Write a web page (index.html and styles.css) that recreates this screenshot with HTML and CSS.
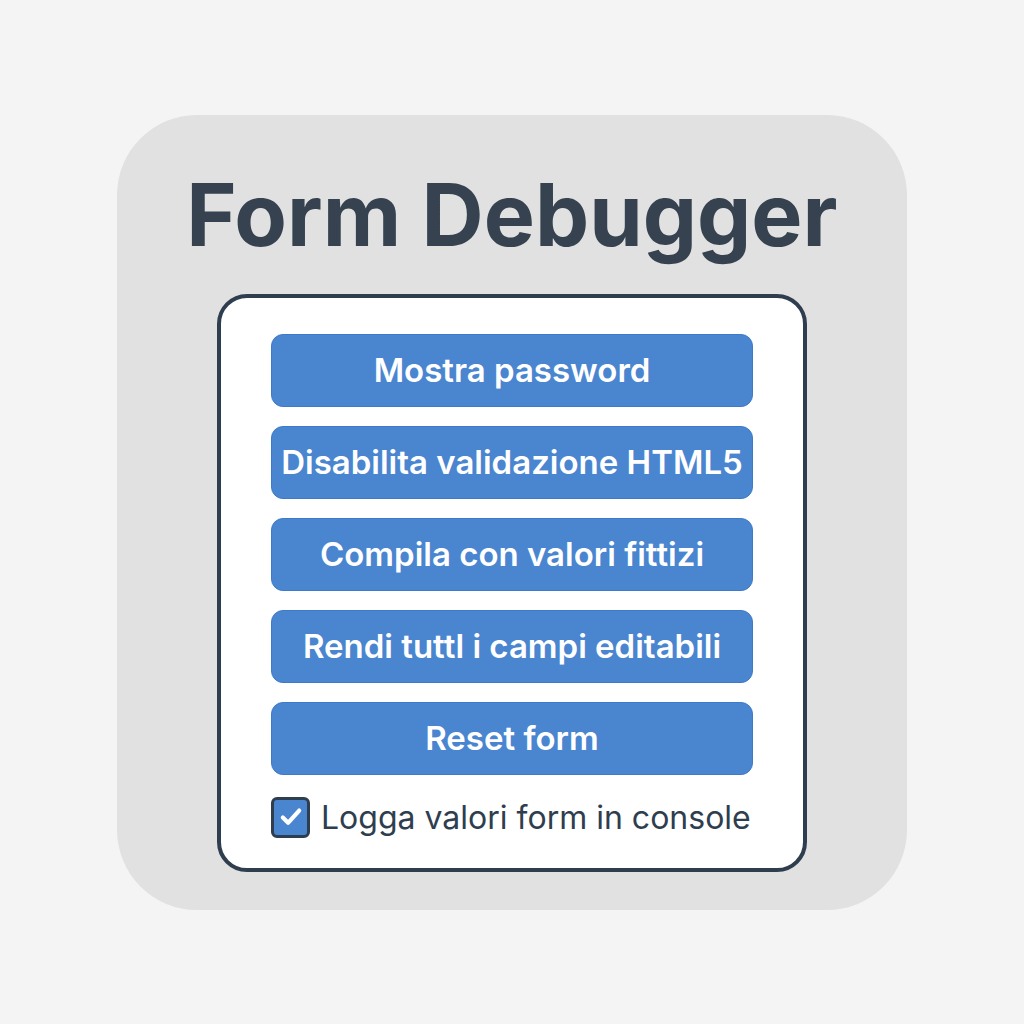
FILE: index.html
```html
<!DOCTYPE html>
<html lang="it">
<head>
  <meta charset="UTF-8" />
  <title>Form Debugger</title>
  <link rel="stylesheet" href="styles.css">
</head>
<body>

  <div class="card">
    <h1 class="title">Form Debugger</h1>
    <div class="panel">
      <button class="action-btn">Mostra password</button>
      <button class="action-btn">Disabilita validazione HTML5</button>
      <button class="action-btn">Compila con valori fittizi</button>
      <button class="action-btn">Rendi tuttl i campi editabili</button>
      <button class="action-btn">Reset form</button>
      <label class="log-option">
        <span class="check">
          <svg viewBox="0 0 24 24" width="28" height="28">
            <path d="M5 12.5l4.5 4.5L19 6.5" fill="none" stroke="#fff" stroke-width="3.6" stroke-linecap="round" stroke-linejoin="round"/>
          </svg>
        </span>
        Logga valori form in console
      </label>
    </div>
  </div>

</body>
</html>
```

FILE: styles.css
```css
* { margin: 0; padding: 0; box-sizing: border-box; font-family: 'Inter', 'Noto Sans', sans-serif; }
body {
  background-color: #f4f4f4;
  height: 100vh;
  display: flex;
  align-items: center;
  justify-content: center;
}
.card {
  width: 790px;
  height: 795px;
  background-color: #e1e1e1;
  border-radius: 80px;
  padding-top: 57px;
  display: flex;
  flex-direction: column;
  align-items: center;
}
.title {
  font-size: 86px;
  line-height: 1;
  font-weight: 700;
  color: #36424f;
  margin-bottom: 36px;
}
.panel {
  width: 590px;
  background-color: #fff;
  border: 4px solid #2f3e4f;
  border-radius: 30px;
  padding: 36px 50px 30px 50px;
  display: flex;
  flex-direction: column;
  gap: 19px;
}
.action-btn {
  height: 73px;
  padding: 0;
  background-color: #4a85d0;
  border: 1px solid #3d7acb;
  border-radius: 12px;
  color: #fff;
  font-size: 33px;
  font-weight: 600;
  cursor: pointer;
}
.log-option {
  display: flex;
  align-items: center;
  gap: 11px;
  font-size: 32px;
  color: #2f3e4f;
  margin-top: 3px;
}
.check {
  width: 39px;
  height: 41px;
  background-color: #4a85d0;
  border: 3px solid #2f3e4f;
  border-radius: 6px;
  display: flex;
  align-items: center;
  justify-content: center;
}
```
